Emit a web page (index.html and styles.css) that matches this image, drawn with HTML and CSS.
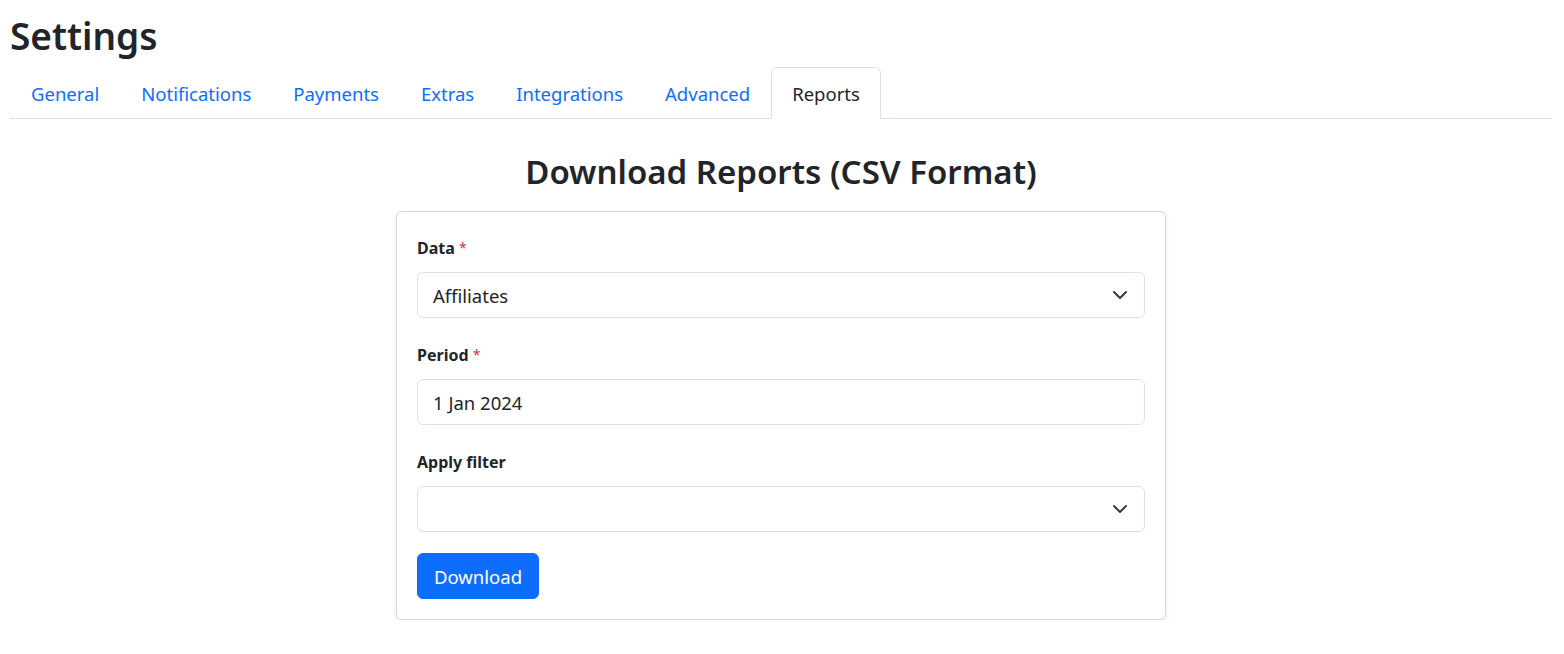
FILE: index.html
```html
<!DOCTYPE html>
<html lang="en">
<head>
<meta charset="utf-8">
<title>Settings</title>
<link rel="stylesheet" href="styles.css">
</head>
<body>
<div class="page">
  <h1 class="page-title">Settings</h1>
  <ul class="tabs">
    <li><a class="tab" href="#">General</a></li>
    <li><a class="tab" href="#">Notifications</a></li>
    <li><a class="tab" href="#">Payments</a></li>
    <li><a class="tab" href="#">Extras</a></li>
    <li><a class="tab" href="#">Integrations</a></li>
    <li><a class="tab" href="#">Advanced</a></li>
    <li><a class="tab active" href="#">Reports</a></li>
  </ul>
  <h2 class="section-title">Download Reports (CSV Format)</h2>
  <form class="card">
    <div class="group">
      <label class="label">Data <span class="req">*</span></label>
      <div class="select">
        <span class="value">Affiliates</span>
        <svg class="chev" width="16" height="10" viewBox="0 0 16 10"><path d="M2 2 8 8l6-6" fill="none" stroke="#343a40" stroke-width="2" stroke-linecap="round" stroke-linejoin="round"/></svg>
      </div>
    </div>
    <div class="group">
      <label class="label">Period <span class="req">*</span></label>
      <div class="input"><span class="value">1 Jan 2024</span></div>
    </div>
    <div class="group last">
      <label class="label">Apply filter</label>
      <div class="select">
        <span class="value"></span>
        <svg class="chev" width="16" height="10" viewBox="0 0 16 10"><path d="M2 2 8 8l6-6" fill="none" stroke="#343a40" stroke-width="2" stroke-linecap="round" stroke-linejoin="round"/></svg>
      </div>
    </div>
    <div class="actions">
      <button type="button" class="btn">Download</button>
    </div>
  </form>
</div>
</body>
</html>
```

FILE: styles.css
```css
* { box-sizing: border-box; }
html, body { margin: 0; padding: 0; background: #fff; }
body {
  font-family: "Noto Sans", "Open Sans", "Liberation Sans", sans-serif;
  color: #212529;
}
.page {
  display: flex;
  flex-direction: column;
  padding: 0 12px 0 10px;
}
.page-title {
  margin: 10px 0 0 0;
  font-size: 37px;
  font-weight: 600;
  line-height: 52px;
  height: 57px;
}
.tabs {
  list-style: none;
  margin: 0;
  padding: 0;
  display: flex;
  border-bottom: 1px solid #dee2e6;
}
.tabs li { margin-bottom: -1px; }
.tab {
  display: block;
  padding: 12px 20px 11px;
  font-size: 18.5px;
  line-height: 27px;
  color: #0d6efd;
  text-decoration: none;
  border: 1px solid transparent;
  border-top-left-radius: 6px;
  border-top-right-radius: 6px;
}
.tab.active {
  color: #212529;
  background: #fff;
  border-color: #dee2e6 #dee2e6 #fff;
}
.section-title {
  margin: 29px 0 0 0;
  text-align: center;
  font-size: 33px;
  font-weight: 600;
  line-height: 48px;
  height: 63px;
}
.card {
  width: 770px;
  margin: 0 auto;
  border: 1px solid #d6d9dc;
  border-radius: 6px;
  box-shadow: 0 2px 4px rgba(0,0,0,0.1);
  padding: 24px 20px 20px;
  display: flex;
  flex-direction: column;
}
.group { display: flex; flex-direction: column; margin-bottom: 25px; }
.group.last { margin-bottom: 21px; }
.label {
  font-size: 16px;
  font-weight: 700;
  line-height: 24px;
  margin-bottom: 12px;
}
.req { color: #dc3545; font-weight: 400; font-size: 14px; vertical-align: 1px; }
.select, .input {
  height: 46px;
  border: 1px solid #dee2e6;
  border-radius: 6px;
  display: flex;
  align-items: center;
  justify-content: space-between;
  padding: 0 16px 0 15px;
  font-size: 18.5px;
}
.value { line-height: 27px; }
.chev { flex: none; }
.actions { display: flex; }
.btn {
  font-family: inherit;
  font-size: 18.5px;
  line-height: 27px;
  height: 46px;
  padding: 0 16px;
  color: #fff;
  background: #0d6efd;
  border: 1px solid #0d6efd;
  border-radius: 6px;
}
```
